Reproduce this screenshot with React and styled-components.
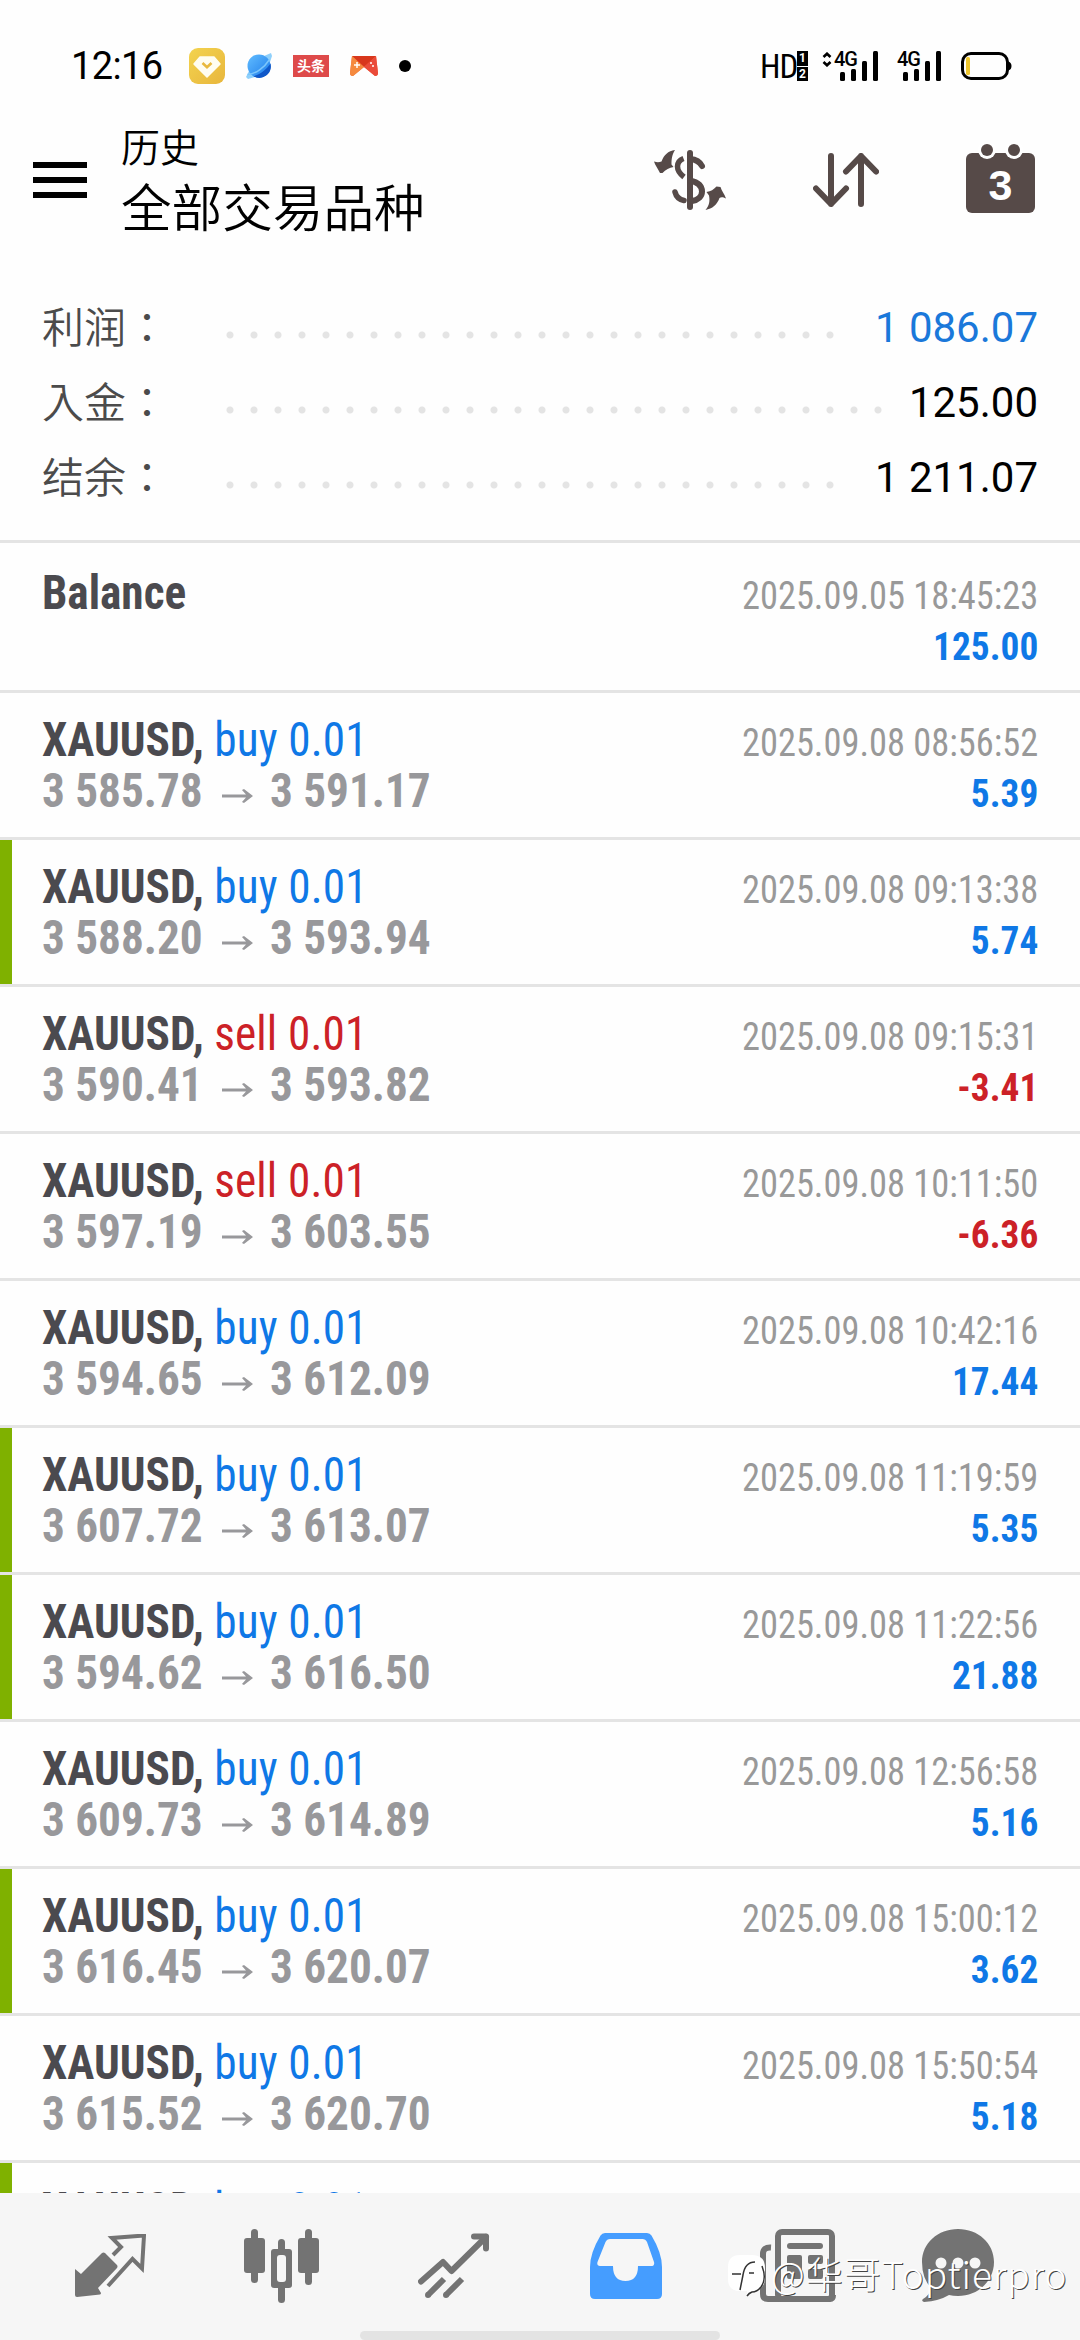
import React from 'react'
import styled, { createGlobalStyle } from 'styled-components'

const BLUE = '#0f78e6'
const RED = '#cc2127'
const LINE = '#e4e4e4'

const summary = [
  { label: '利润：', value: '1 086.07', dots: 26, color: '#1a78da' },
  { label: '入金：', value: '125.00', dots: 28, color: '#000' },
  { label: '结余：', value: '1 211.07', dots: 26, color: '#000' },
]

const deals = [
  { side: 'buy', open: '3 585.78', close: '3 591.17', time: '2025.09.08 08:56:52', profit: '5.39' },
  { side: 'buy', open: '3 588.20', close: '3 593.94', time: '2025.09.08 09:13:38', profit: '5.74', marked: true },
  { side: 'sell', open: '3 590.41', close: '3 593.82', time: '2025.09.08 09:15:31', profit: '-3.41' },
  { side: 'sell', open: '3 597.19', close: '3 603.55', time: '2025.09.08 10:11:50', profit: '-6.36' },
  { side: 'buy', open: '3 594.65', close: '3 612.09', time: '2025.09.08 10:42:16', profit: '17.44' },
  { side: 'buy', open: '3 607.72', close: '3 613.07', time: '2025.09.08 11:19:59', profit: '5.35', marked: true },
  { side: 'buy', open: '3 594.62', close: '3 616.50', time: '2025.09.08 11:22:56', profit: '21.88', marked: true },
  { side: 'buy', open: '3 609.73', close: '3 614.89', time: '2025.09.08 12:56:58', profit: '5.16' },
  { side: 'buy', open: '3 616.45', close: '3 620.07', time: '2025.09.08 15:00:12', profit: '3.62', marked: true },
  { side: 'buy', open: '3 615.52', close: '3 620.70', time: '2025.09.08 15:50:54', profit: '5.18' },
  { side: 'buy', marked: true },
]

function StatusBar() {
  return (
    <Status>
      <Clock>12:16</Clock>
      <AppIcons>
        <svg width="36" height="36" viewBox="0 0 36 36">
          <defs>
            <linearGradient id="gold" x1="0" y1="0" x2="1" y2="1">
              <stop offset="0" stopColor="#f3d34f" />
              <stop offset="1" stopColor="#e8b63c" />
            </linearGradient>
          </defs>
          <rect width="36" height="36" rx="9" fill="url(#gold)" />
          <path d="M11 9h14l6 7-13 13L5 16z" fill="#fffdf0" stroke="#fffdf0" strokeWidth="1.5" strokeLinejoin="round" />
          <path d="M13.500 15l4.500 4.300 4.500-4.300" fill="none" stroke="#e9b93e" strokeWidth="2.600" />
        </svg>
        <Planet width="28" height="28" viewBox="0 0 28 28">
          <defs>
            <linearGradient id="sky" x1="0" y1="0" x2="1" y2="1">
              <stop offset="0" stopColor="#62bdff" />
              <stop offset="1" stopColor="#1c7bea" />
            </linearGradient>
          </defs>
          <path d="M19 4l7-3 1 3-2 6zM4 19l-3 6 2 2 7-2z" fill="#8fd0fb" />
          <circle cx="14" cy="14" r="11.500" fill="url(#sky)" />
          <path d="M25.500 11.500A11.500 11.500 0 0 1 8.500 24.200C15 22.500 21 18 25.500 11.500z" fill="#0f57c8" />
          <path d="M2.500 22.500c8-.5 17-7 22-15" fill="none" stroke="#7cc6fb" strokeWidth="1.500" />
        </Planet>
        <News>头条</News>
        <svg width="30" height="22" viewBox="0 0 30 22">
          <path d="M3 1h24l2 17q0 3-3 3l-11-9-11 9q-3 0-3-3z" fill="#f3673a" />
          <path d="M3 1h24L15 12z" fill="#d8371c" />
          <path d="M3 1l12 11L4 21q-3 0-3-3z" fill="#f58a3f" />
          <path d="M27 1L15 12l11 9q3 0 3-3z" fill="#ea4b3a" />
          <path d="M5 10h6M8 7v6" stroke="#fff" strokeWidth="1.500" />
          <circle cx="22" cy="8" r="1" fill="#fff" />
          <circle cx="24" cy="11" r="1" fill="#fff" />
        </svg>
      </AppIcons>
      <Dot />
      <StatusRight>
        <Hd>HD</Hd>
        <SimBadge>
          <span>1</span>
          <span>2</span>
        </SimBadge>
        <Signal updown />
        <Signal />
        <svg width="52" height="30" viewBox="0 0 52 30">
          <rect x="2.500" y="2.500" width="45" height="25" rx="8.500" fill="none" stroke="#000" strokeWidth="3" />
          <path d="M48.500 10.500q3 1 3 4.500t-3 4.500z" />
          <rect x="6" y="6" width="4" height="18" rx="1.500" fill="#eec62f" />
        </svg>
      </StatusRight>
    </Status>
  )
}

function Signal({ updown }) {
  return (
    <SignalBox>
      {updown && (
        <UpDown width="10" height="15" viewBox="0 0 10 15">
          <path d="M1.500 5L5 1.700 8.500 5M1.500 10L5 13.300 8.500 10" fill="none" stroke="#000" strokeWidth="2.600" />
        </UpDown>
      )}
      <NetLabel>4G</NetLabel>
      <svg width="39" height="30" viewBox="0 0 39 30">
        <rect x="0" y="21" width="5" height="9" rx="1.500" />
        <rect x="11" y="18" width="5" height="12" rx="1.500" />
        <rect x="22" y="10" width="5" height="20" rx="1.500" />
        <rect x="33" y="0" width="5" height="30" rx="1.500" />
      </svg>
    </SignalBox>
  )
}

function AppBar() {
  return (
    <Bar>
      <Burger>
        <i />
        <i />
        <i />
      </Burger>
      <Titles>
        <Small>历史</Small>
        <Big>全部交易品种</Big>
      </Titles>
      <Actions>
        <svg width="72" height="62" viewBox="0 0 72 62">
          <g fill="none" stroke="#564a48" strokeLinecap="round">
            <path d="M36 4v54" strokeWidth="6" />
            <path d="M48 17c-2-4-6-6.500-12-7M36 31.500c7 1.500 12 5 12 11 0 5-4 8.500-10 9.500" strokeWidth="6" />
            <path d="M29.500 9.500c-4 1.500-6 4.500-6 8s2 7 6.500 10.500" strokeWidth="5.500" strokeLinecap="butt" />
            <path d="M21 43c1 4 4 7.500 9 8.500" strokeWidth="5.500" />
          </g>
          <path d="M21 1c-3 5-3.500 9-3.500 14.500l2 2.500c-4 .5-8 2.500-11 6L6 24C4 20 1 16 0 12.500c3 1 5 1 7.500 0C10 6 14 2 21 1z" fill="#564a48" />
          <path d="M51.500 61c4-5 4.500-9 3.500-14.500L52.500 43c4.500-.5 7-2.500 10-5.500l4 .500c1 4 4 7 5.500 11.500-3-1.500-5-1.500-6.500-.5C63 56 58.500 59.500 51.500 61z" fill="#564a48" />
        </svg>
        <svg width="66" height="54" viewBox="0 0 66 54">
          <path
            d="M18 3v48M3 35.500L18 51l15-15.500M48 51V3M33 18.500L48 3l15 15.500"
            fill="none"
            stroke="#564a48"
            strokeWidth="6"
            strokeLinecap="round"
            strokeLinejoin="round"
          />
        </svg>
        <Calendar>
          <svg width="69" height="69" viewBox="0 0 69 69">
            <rect y="9" width="69" height="60" rx="6" fill="#564a48" />
            <circle cx="21" cy="6" r="9" fill="#fff" />
            <circle cx="48" cy="6" r="9" fill="#fff" />
            <circle cx="21" cy="6" r="6" fill="#564a48" />
            <circle cx="48" cy="6" r="6" fill="#564a48" />
          </svg>
          <Day>3</Day>
        </Calendar>
      </Actions>
    </Bar>
  )
}

function Deal({ side, open, close, time, profit, marked }) {
  return (
    <Row $marked={marked}>
      <Left>
        <div>
          <b>XAUUSD,</b> <Side $side={side}>{side} 0.01</Side>
        </div>
        {open && (
          <Prices>
            <Price>{open}</Price>
            <Arrow width="33" height="14" viewBox="0 0 31 14" preserveAspectRatio="none">
              <path d="M0 5.500h24L20 1l2-1 9 7-9 7-2-1 4-4.500H0z" />
            </Arrow>
            <Price>{close}</Price>
          </Prices>
        )}
      </Left>
      {time && (
        <Right>
          <Time>{time}</Time>
          <Profit $loss={profit.startsWith('-')}>{profit}</Profit>
        </Right>
      )}
    </Row>
  )
}

function TabBar() {
  return (
    <Tabs>
      <Tab>
        <svg width="72" height="64" viewBox="0 0 72 64">
          <path d="M1 35l6 5 21-21q1.500-1 3 0l12 12q1 1.500 0 3L24 54l3 5q0 1-1 1.500L3 63q-2 0-2-2z" fill="#737373" />
          <path d="M39 21l8-8-9-9 32-2.500-2 33-9.500-9.500-24.500 27" fill="none" stroke="#737373" strokeWidth="4" />
        </svg>
      </Tab>
      <Tab>
        <svg width="76" height="74" viewBox="0 0 76 74" fill="#737373">
          <rect x="7" width="7" height="54" rx="3.500" />
          <rect y="9" width="21" height="35" rx="3" />
          <rect x="61" width="7" height="56" rx="3.500" />
          <rect x="54" y="9" width="21" height="35" rx="3" />
          <rect x="34" y="10" width="7" height="64" rx="3.500" />
          <rect x="27" y="20" width="21" height="39" rx="3" />
          <rect x="33" y="26" width="9" height="27" rx="3" fill="#f6f6f6" />
        </svg>
      </Tab>
      <Tab>
        <svg width="72" height="68" viewBox="0 0 72 68" fill="none" stroke="#737373" strokeWidth="6" strokeLinejoin="round">
          <path d="M3 49.500L25 30l8.500 9L68 5" strokeLinecap="round" />
          <path d="M56 4.500h12v12" strokeLinecap="round" />
          <path d="M26 47L10 63M44 47L28 63" />
          <path d="M10 63h0M28 63h0" strokeLinecap="round" />
        </svg>
      </Tab>
      <Tab>
        <svg width="72" height="66" viewBox="0 0 72 66">
          <path
            fillRule="evenodd"
            d="M15 0h42q3 0 4.500 2.500Q72 20 72 34v27q0 5-5 5H5q-5 0-5-5V34Q0 20 10.500 2.500 12 0 15 0zM20 6q-3 0-4.500 3L7.500 29q-1 4 2.500 4h13q0 15 12.500 15T48 33h13q4 0 3-4L57 9q-1.500-3-4.500-3z"
            fill="#459dff"
          />
        </svg>
      </Tab>
      <Tab>
        <svg width="76" height="73" viewBox="0 0 76 73">
          <path d="M11 18.500Q3 18 3 25v40q0 5 5 5h62q3 0 3-4" fill="none" stroke="#737373" strokeWidth="6" />
          <rect x="18" y="3" width="54" height="67" rx="4" fill="#f6f6f6" stroke="#737373" strokeWidth="6" />
          <g fill="#737373">
            <rect x="27" y="14" width="36" height="6" rx="3" />
            <rect x="27" y="26" width="15" height="24" rx="2" />
            <rect x="48" y="26" width="15" height="9" rx="2" />
            <rect x="48" y="40" width="15" height="10" rx="2" />
          </g>
        </svg>
      </Tab>
      <Tab>
        <svg width="72" height="73" viewBox="0 0 72 73">
          <path d="M36 0C56 0 72 14 72 33S56 67 36 67q-5 0-9-1-10 6-25 7-3-1-1-3 7-4 8-11Q0 49 0 33C0 14 16 0 36 0z" fill="#737373" />
          <circle cx="19" cy="34" r="5.500" fill="#f6f6f6" />
          <circle cx="36" cy="34" r="5.500" fill="#f6f6f6" />
          <circle cx="53" cy="34" r="5.500" fill="#f6f6f6" />
        </svg>
      </Tab>
      <HomeBar />
      <Watermark>
        <svg width="40" height="44" viewBox="0 0 40 44">
          <path d="M12 1h12q13 0 13 13v10q0 12-13 13l-5 4v-4h-7Q0 37 0 25V13Q0 1 12 1z" fill="#fff" />
          <path d="M12 36l3-15q2-13 12-13M4 20h9M21 19h5M34 12q5 13-1 21-4 5-9 5-3 1-5 4" fill="none" stroke="#333" strokeWidth="1.500" />
        </svg>
        <span>@华哥Toptierpro</span>
      </Watermark>
    </Tabs>
  )
}

function App() {
  return (
    <Screen>
      <GlobalStyle />
      <StatusBar />
      <AppBar />
      <Summary>
        {summary.map((item) => (
          <SummaryRow key={item.label}>
            <Label>{item.label}</Label>
            <Leader $dots={item.dots} />
            <Amount $color={item.color}>{item.value}</Amount>
          </SummaryRow>
        ))}
      </Summary>
      <List>
        <Row $first>
          <Left>
            <b>Balance</b>
          </Left>
          <Right>
            <Time>2025.09.05 18:45:23</Time>
            <Profit>125.00</Profit>
          </Right>
        </Row>
        {deals.map((deal, i) => (
          <Deal key={i} {...deal} />
        ))}
      </List>
      <TabBar />
    </Screen>
  )
}

export default App

const GlobalStyle = createGlobalStyle`
  * {
    box-sizing: border-box;
  }
  body {
    margin: 0;
    background: #fff;
  }
  svg {
    display: block;
    flex: none;
  }
`

const Screen = styled.div`
  width: 1080px;
  height: 2340px;
  overflow: hidden;
  display: flex;
  flex-direction: column;
  background: #fefefe;
  font-family: Roboto, 'Noto Sans CJK SC', sans-serif;
  white-space: nowrap;
`

const Status = styled.div`
  height: 120px;
  padding: 12px 68px 0 71px;
  display: flex;
  align-items: center;
  flex: none;
`

const Clock = styled.div`
  width: 118px;
  font-size: 38px;
  letter-spacing: -0.6px;
`

const AppIcons = styled.div`
  display: flex;
  align-items: center;
`

const Planet = styled.svg`
  margin: 0 20px;
`

const News = styled.div`
  width: 36px;
  height: 22px;
  margin-right: 20px;
  background: #de4a4a;
  color: #fff;
  font: bold 14px/21px 'Noto Sans CJK SC', sans-serif;
  text-align: center;
`

const Dot = styled.div`
  width: 12px;
  height: 12px;
  margin-left: 20px;
  border-radius: 50%;
  background: #000;
`

const StatusRight = styled.div`
  margin-left: auto;
  display: flex;
  align-items: center;
`

const Hd = styled.div`
  width: 37px;
  font-size: 33px;
  font-stretch: 75%;
  letter-spacing: -1px;
`

const SimBadge = styled.div`
  width: 11px;
  margin-right: 26px;
  display: grid;
  gap: 1px;
  span {
    height: 14.5px;
    background: #000;
    color: #fff;
    font: bold 12px/15px Roboto, sans-serif;
    text-align: center;
  }
`

const SignalBox = styled.div`
  position: relative;
  margin-right: 18px;
  padding-left: 6px;
`

const UpDown = styled.svg`
  position: absolute;
  left: -12px;
  top: 1px;
`

const NetLabel = styled.div`
  position: absolute;
  left: 0;
  top: -3px;
  font-size: 20px;
  line-height: 22px;
  font-weight: 500;
  letter-spacing: -1px;
`

const Bar = styled.div`
  height: 120px;
  padding: 0 45px 0 33px;
  display: flex;
  align-items: center;
  flex: none;
`

const Burger = styled.div`
  width: 54px;
  display: grid;
  gap: 9px;
  i {
    height: 6px;
    background: #000;
  }
`

const Titles = styled.div`
  margin-left: 34px;
  padding-bottom: 11px;
  font-family: 'Noto Sans CJK SC', sans-serif;
  color: #000;
`

const Small = styled.div`
  font-size: 39px;
  font-weight: 350;
  line-height: 60px;
`

const Big = styled.div`
  font-size: 50.6px;
  font-weight: 350;
  line-height: 60px;
`

const Actions = styled.div`
  margin-left: auto;
  display: flex;
  align-items: center;
  gap: 87px;
`

const Calendar = styled.div`
  position: relative;
  margin-top: -3px;
`

const Day = styled.div`
  position: absolute;
  inset: 13px 0 0;
  text-align: center;
  font: bold 43px/56px 'Liberation Sans', sans-serif;
  color: #fff;
`

const Summary = styled.div`
  height: 300px;
  padding: 49px 42px 0;
  flex: none;
`

const SummaryRow = styled.div`
  height: 75px;
  display: flex;
  align-items: center;
`

const Label = styled.div`
  width: 176px;
  padding-bottom: 4px;
  font: 350 42px/71px 'Noto Sans CJK TC', sans-serif;
  color: #4b4b4b;
`

const Leader = styled.div`
  width: ${(props) => props.$dots * 24}px;
  height: 8px;
  margin-top: 17px;
  background: radial-gradient(circle, #e4e4e4 3px, transparent 4px) 0 0 / 24px 8px repeat-x;
`

const Amount = styled.div`
  margin-left: auto;
  padding-top: 2px;
  font-size: 42px;
  color: ${(props) => props.$color};
`

const List = styled.div`
  flex: 1;
  min-height: 0;
  overflow: hidden;
`

const Row = styled.div`
  height: ${(props) => (props.$first ? 150 : 147)}px;
  padding: ${(props) => (props.$first ? 3 : 0)}px 42px 0 30px;
  border-top: 3px solid ${LINE};
  display: flex;
  justify-content: space-between;
  font-stretch: 75%;
  background: linear-gradient(#7fb100, #7fb100) 0 0 / ${(props) => (props.$marked ? 12 : 0)}px 100% no-repeat;
`

const Left = styled.div`
  margin-left: 12px;
  padding-top: 21px;
  font-size: 48px;
  line-height: 51px;
  color: #4b4a4f;
  transform: scaleX(0.942);
  transform-origin: left;
`

const Side = styled.span`
  letter-spacing: 0.15px;
  color: ${(props) => (props.$side === 'buy' ? BLUE : RED)};
`

const Prices = styled.div`
  display: flex;
  align-items: center;
  font-weight: bold;
  color: #98989b;
`

const Price = styled.span`
  width: 170px;
`

const Arrow = styled.svg`
  margin: 10px 18px 0 21px;
  fill: #98989b;
`

const Right = styled.div`
  padding-top: 25px;
  font-size: 39px;
  line-height: 51px;
  text-align: right;
`

const Time = styled.div`
  color: #999;
  transform: scaleX(0.934);
  transform-origin: right;
`

const Profit = styled.div`
  font-weight: bold;
  color: ${(props) => (props.$loss ? RED : BLUE)};
  transform: scaleX(0.957);
  transform-origin: right;
`

const Tabs = styled.div`
  position: relative;
  height: 147px;
  padding: 0 48px 0 24px;
  display: grid;
  grid-template-columns: repeat(5, 172px) 148px;
  flex: none;
  background: #f6f6f6;
`

const Tab = styled.div`
  height: 145px;
  display: flex;
  align-items: center;
  justify-content: center;
`

const HomeBar = styled.div`
  position: absolute;
  left: 360px;
  bottom: 0;
  width: 360px;
  height: 9px;
  border-radius: 5px;
  background: #e3e3e3;
`

const Watermark = styled.div`
  position: absolute;
  left: 728px;
  top: 60px;
  display: flex;
  align-items: center;
  gap: 3px;
  font: 300 37px/52px 'Noto Sans CJK SC', sans-serif;
  letter-spacing: 1px;
  color: #fff;
  text-shadow: 1px 1px 0 #444;
  span {
    margin-top: -6px;
  }
`
